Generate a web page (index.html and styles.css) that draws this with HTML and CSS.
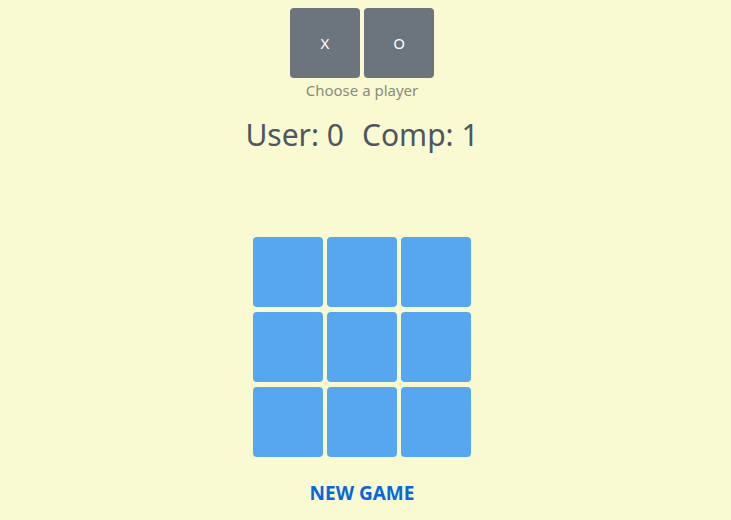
FILE: index.html
```html
<!DOCTYPE html>
<html>
<head>
<meta charset="utf-8">
<link rel="stylesheet" href="styles.css">
</head>
<body>
<div class="app">
  <div class="players">
    <button class="pick">X</button>
    <button class="pick">O</button>
  </div>
  <div class="hint">Choose a player</div>
  <div class="score"><span>User: 0</span><span>Comp: 1</span></div>
  <div class="board">
    <div class="cell"></div><div class="cell"></div><div class="cell"></div>
    <div class="cell"></div><div class="cell"></div><div class="cell"></div>
    <div class="cell"></div><div class="cell"></div><div class="cell"></div>
  </div>
  <div class="newgame">NEW GAME</div>
</div>
</body>
</html>
```
FILE: styles.css
```css
html, body {
  margin: 0;
  padding: 0;
  background: #f9fad1;
}
body {
  font-family: "Noto Sans", "Open Sans", sans-serif;
  padding-top: 8px;
}
.app {
  width: 724px;
  display: flex;
  flex-direction: column;
  align-items: center;
}
.players {
  display: flex;
  gap: 4px;
}
.pick {
  width: 70px;
  height: 70px;
  border: none;
  border-radius: 4px;
  background: #6c757d;
  color: #fff;
  font-family: inherit;
  font-size: 15px;
  padding: 0;
}
.hint {
  margin-top: 2px;
  font-size: 15px;
  line-height: 21px;
  color: #8b8a7f;
}
.score {
  margin-top: 14px;
  display: flex;
  gap: 18px;
  font-size: 30px;
  line-height: 40px;
  color: #4f5660;
}
.board {
  margin-top: 82px;
  display: grid;
  grid-template-columns: repeat(3, 70px);
  grid-auto-rows: 70px;
  column-gap: 4px;
  row-gap: 5px;
}
.cell {
  background: #57a7f0;
  border-radius: 4px;
}
.newgame {
  margin-top: 23px;
  font-size: 19px;
  font-weight: 700;
  color: #0767dc;
  line-height: 26px;
}
```
